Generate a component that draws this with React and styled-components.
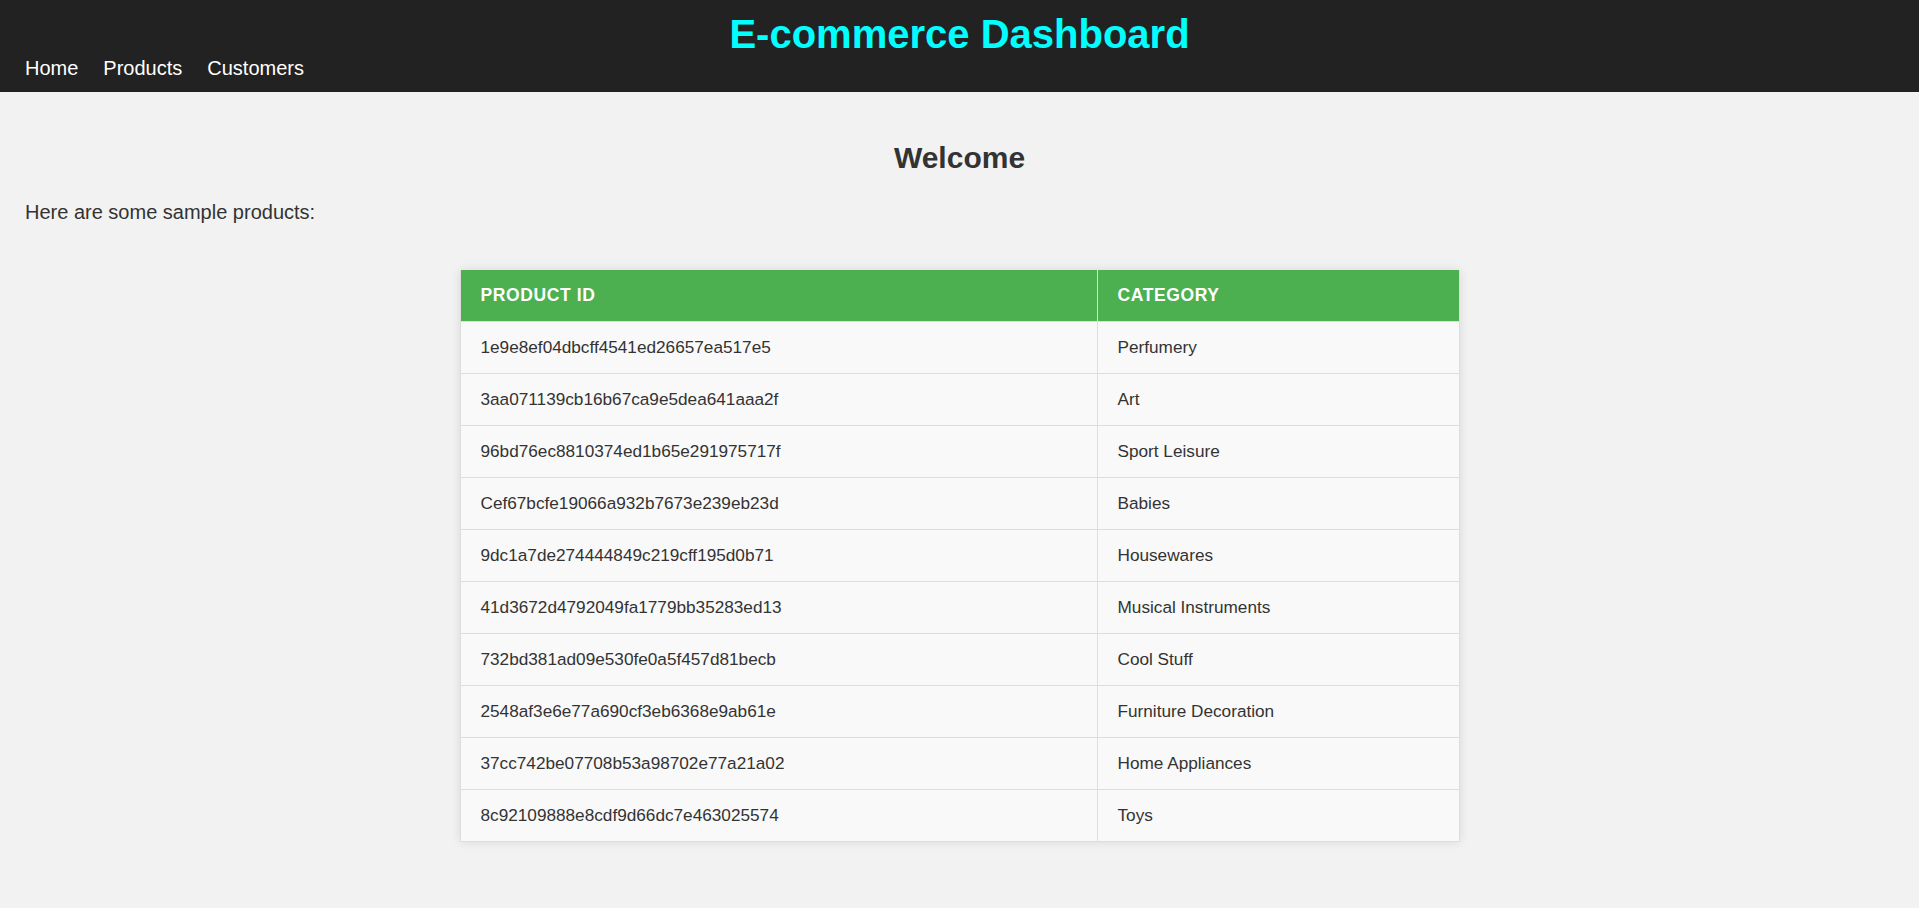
import React from "react";
import styled, { createGlobalStyle } from "styled-components";

const GlobalStyle = createGlobalStyle`
    html, body {
        margin: 0;
        padding: 0;
        background-color: #f2f2f2;
        font-family: "Liberation Sans", Arial, sans-serif;
        color: #333;
    }
`

const Header = styled.header`
    background-color: #222;
    padding: 11px 25px 12px;
`
const Title = styled.h1`
    margin: 0;
    text-align: center;
    color: #00ffff;
    font-size: 40px;
    font-weight: bold;
    line-height: 46px;
`
const Nav = styled.nav`
    display: flex;
    column-gap: 25px;
    height: 23px;
`
const NavLink = styled.a`
    color: #fff;
    text-decoration: none;
    font-size: 20px;
    line-height: 23px;
    cursor: pointer;
`
const Main = styled.main`
    padding: 0 25px 60px;
`
const Heading = styled.h2`
    margin: 0;
    padding-top: 49px;
    text-align: center;
    font-size: 30px;
    line-height: 34px;
    color: #333;
`
const Intro = styled.p`
    margin: 26px 0 0;
    font-size: 20px;
    line-height: 23px;
`
const Table = styled.table`
    width: 1000px;
    margin: 46px auto 0;
    border-collapse: collapse;
    box-shadow: 0 0 10px rgba(0, 0, 0, 0.1);
`
const HeadCell = styled.th`
    width: ${p => p.$width || "auto"};
    height: 51px;
    padding: 0 20px;
    box-sizing: border-box;
    background-color: #4caf50;
    color: #fff;
    text-align: left;
    text-transform: uppercase;
    font-size: 17.5px;
    font-weight: bold;
    letter-spacing: 0.6px;
    border: 1px solid #ddd;
    border-top: none;
`
const Cell = styled.td`
    height: 52px;
    padding: 0 20px;
    box-sizing: border-box;
    background-color: #f9f9f9;
    font-size: 17.2px;
    color: #333;
    border: 1px solid #ddd;
`

const products = [
    ["1e9e8ef04dbcff4541ed26657ea517e5", "Perfumery"],
    ["3aa071139cb16b67ca9e5dea641aaa2f", "Art"],
    ["96bd76ec8810374ed1b65e291975717f", "Sport Leisure"],
    ["Cef67bcfe19066a932b7673e239eb23d", "Babies"],
    ["9dc1a7de274444849c219cff195d0b71", "Housewares"],
    ["41d3672d4792049fa1779bb35283ed13", "Musical Instruments"],
    ["732bd381ad09e530fe0a5f457d81becb", "Cool Stuff"],
    ["2548af3e6e77a690cf3eb6368e9ab61e", "Furniture Decoration"],
    ["37cc742be07708b53a98702e77a21a02", "Home Appliances"],
    ["8c92109888e8cdf9d66dc7e463025574", "Toys"],
];

export default function App(){
    return(
        <>
            <GlobalStyle/>
            <Header>
                <Title>E-commerce Dashboard</Title>
                <Nav>
                    <NavLink>Home</NavLink>
                    <NavLink>Products</NavLink>
                    <NavLink>Customers</NavLink>
                </Nav>
            </Header>
            <Main>
                <Heading>Welcome</Heading>
                <Intro>Here are some sample products:</Intro>
                <Table>
                    <thead>
                        <tr>
                            <HeadCell $width="637px">Product ID</HeadCell>
                            <HeadCell>Category</HeadCell>
                        </tr>
                    </thead>
                    <tbody>
                        {products.map(([id, category]) => (
                            <tr key={id}>
                                <Cell>{id}</Cell>
                                <Cell>{category}</Cell>
                            </tr>
                        ))}
                    </tbody>
                </Table>
            </Main>
        </>
    )
}
